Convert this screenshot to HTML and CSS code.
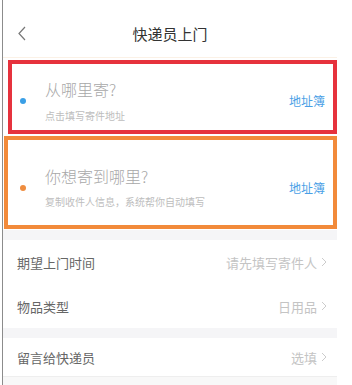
FILE: index.html
```html
<!DOCTYPE html>
<html lang="zh">
<head>
<meta charset="utf-8">
<link rel="stylesheet" href="styles.css">
</head>
<body>
<div class="page">
  <header class="nav">
    <svg class="back" width="10" height="15" viewBox="0 0 10 15"><path d="M8 1 L2 7.5 L8 14" fill="none" stroke="#777" stroke-width="1.2"/></svg>
    <div class="title">快递员上门</div>
  </header>

  <section class="addr addr-from">
    <span class="dot dot-blue"></span>
    <div class="addr-text">
      <div class="addr-main">从哪里寄?</div>
      <div class="addr-sub">点击填写寄件地址</div>
    </div>
    <a class="book">地址簿</a>
  </section>

  <section class="addr addr-to">
    <span class="dot dot-orange"></span>
    <div class="addr-text">
      <div class="addr-main">你想寄到哪里?</div>
      <div class="addr-sub">复制收件人信息，系统帮你自动填写</div>
    </div>
    <a class="book">地址簿</a>
  </section>

  <div class="gap"></div>

  <div class="row">
    <span class="label">期望上门时间</span>
    <span class="value">请先填写寄件人<svg class="chev" width="6" height="10" viewBox="0 0 6 10"><path d="M1 1 L5 5 L1 9" fill="none" stroke="#ccc" stroke-width="1"/></svg></span>
  </div>
  <div class="row">
    <span class="label">物品类型</span>
    <span class="value">日用品<svg class="chev" width="6" height="10" viewBox="0 0 6 10"><path d="M1 1 L5 5 L1 9" fill="none" stroke="#ccc" stroke-width="1"/></svg></span>
  </div>

  <div class="gap"></div>

  <div class="row row-last">
    <span class="label">留言给快递员</span>
    <span class="value">选填<svg class="chev" width="6" height="10" viewBox="0 0 6 10"><path d="M1 1 L5 5 L1 9" fill="none" stroke="#ccc" stroke-width="1"/></svg></span>
  </div>
  <div class="tail"></div>
</div>
</body>
</html>
```

FILE: styles.css
```css
html, body {
  margin: 0;
  padding: 0;
  background: #ffffff;
}
body {
  font-family: "Noto Sans CJK SC", "Noto Sans", sans-serif;
  height: 385px;
  overflow: hidden;
}
.page {
  margin-left: 2px;
  border-left: 1px solid #8c8c8c;
  width: 334px;
  height: 385px;
  background: #fff;
}
.nav {
  height: 58px;
  display: flex;
  align-items: center;
  justify-content: center;
  position: relative;
  padding-top: 10px;
  box-sizing: border-box;
  border-bottom: 1px solid #fbf1e6;
}
.back {
  position: absolute;
  left: 14px;
  top: 26px;
}
.title {
  font-size: 15px;
  color: #333;
  line-height: 20px;
}
.addr {
  display: flex;
  align-items: center;
  box-sizing: border-box;
  background: #fff;
}
.addr-from {
  margin: 2px 0 0 5px;
  width: 329px;
  height: 74px;
  border: 4px solid #e6323d;
  padding: 14px 8px 7px 8px;
}
.addr-to {
  margin: 2px 0 0 1px;
  width: 333px;
  height: 93px;
  border: 4px solid #f28a3a;
  padding: 26px 8px 16px 12px;
}
.dot {
  width: 6px;
  height: 6px;
  border-radius: 50%;
  flex: none;
}
.dot-blue { background: #3a9fe6; }
.dot-orange { background: #ef8d3f; }
.addr-text {
  flex: 1;
  margin-left: 19px;
  display: flex;
  flex-direction: column;
}
.addr-main {
  font-size: 16px;
  line-height: 20px;
  color: #a8a8a8;
  font-weight: 300;
}
.addr-sub {
  font-size: 10px;
  line-height: 14px;
  color: #bdbdbd;
  margin-top: 10px;
}
.addr-to .addr-sub { margin-top: 9px; }
.book {
  font-size: 12px;
  color: #4a9fe6;
  line-height: 16px;
}
.gap {
  height: 10px;
  background: #f5f5f7;
}
.addr-to + .gap { margin-top: 1px; }
.row {
  height: 44px;
  display: flex;
  align-items: center;
  justify-content: space-between;
  padding: 0 10px 0 14px;
  box-sizing: border-box;
}
.row-last {
  height: 39px;
  border-bottom: 1px solid #eeeeee;
}
.label {
  font-size: 13px;
  color: #666;
}
.value {
  font-size: 13px;
  color: #c4c4c4;
  display: flex;
  align-items: center;
}
.chev {
  margin-left: 4px;
}
.tail {
  height: 10px;
  background: #f8f8f8;
}
```
